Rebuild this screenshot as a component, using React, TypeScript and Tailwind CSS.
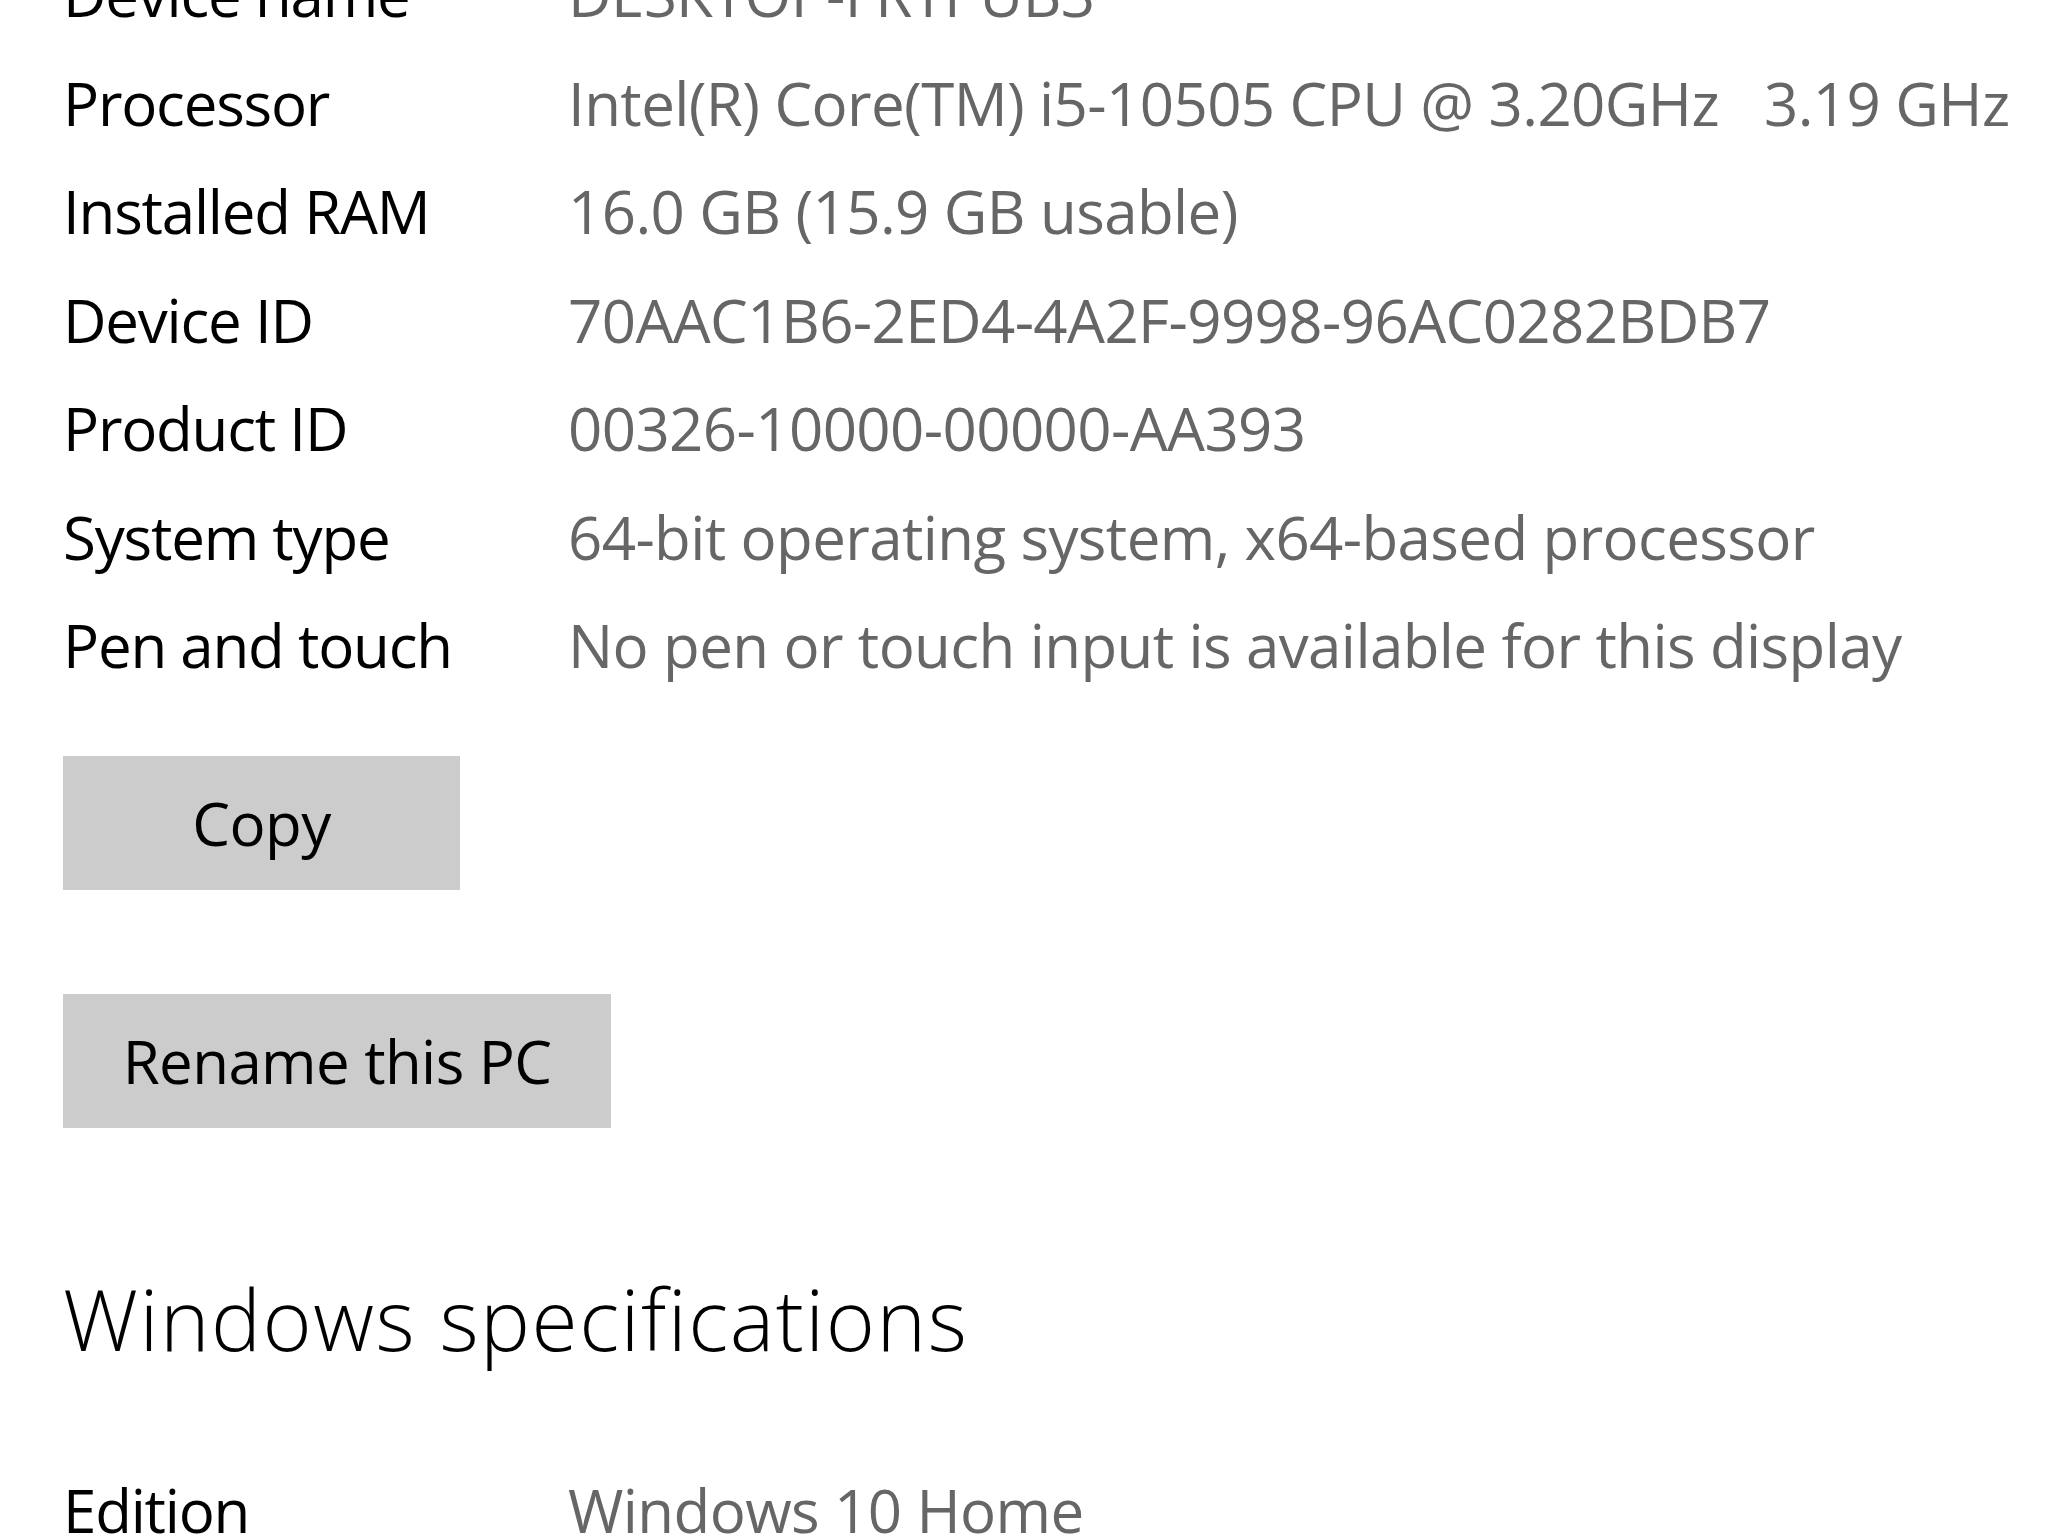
import React from "react";

type Spec = { label: string; value: string };

const deviceSpecs: Spec[] = [
  { label: "Device name", value: "DESKTOP-FRTPUB3" },
  { label: "Processor", value: "Intel(R) Core(TM) i5-10505 CPU @ 3.20GHz   3.19 GHz" },
  { label: "Installed RAM", value: "16.0 GB (15.9 GB usable)" },
  { label: "Device ID", value: "70AAC1B6-2ED4-4A2F-9998-96AC0282BDB7" },
  { label: "Product ID", value: "00326-10000-00000-AA393" },
  { label: "System type", value: "64-bit operating system, x64-based processor" },
  { label: "Pen and touch", value: "No pen or touch input is available for this display" },
];

const windowsSpecs: Spec[] = [{ label: "Edition", value: "Windows 10 Home" }];

function SpecRow({ label, value }: Spec) {
  return (
    <div className="grid h-[108.5px] grid-cols-[505px_1fr] whitespace-pre text-[60px] leading-[108.5px]">
      <span className="tracking-[-1.2px] text-black">{label}</span>
      <span className="tracking-[-0.6px] text-[#666666]">{value}</span>
    </div>
  );
}

function GrayButton({ children, width }: { children: React.ReactNode; width: string }) {
  return (
    <button
      type="button"
      className={`flex h-[134px] items-center justify-center bg-[#cccccc] text-[60px] leading-none tracking-[-0.6px] text-black ${width}`}
    >
      {children}
    </button>
  );
}

export default function App() {
  return (
    <div
      className="h-screen w-full overflow-hidden bg-white"
      style={{ fontFamily: '"Open Sans", "Noto Sans", sans-serif' }}
    >
      <div className="mt-[-60px] flex flex-col items-start pl-[63px]">
        <div className="w-full">
          {deviceSpecs.map((s) => (
            <SpecRow key={s.label} {...s} />
          ))}
        </div>

        <div className="mt-[56px]">
          <GrayButton width="w-[397px]">Copy</GrayButton>
        </div>
        <div className="mt-[104px]">
          <GrayButton width="w-[548px]">Rename this PC</GrayButton>
        </div>

        <h2 className="mt-[141px] text-[84px] font-light leading-[100px] tracking-[1.5px] text-black">
          Windows specifications
        </h2>

        <div className="mt-[87px] w-full">
          {windowsSpecs.map((s) => (
            <SpecRow key={s.label} {...s} />
          ))}
        </div>
      </div>
    </div>
  );
}
